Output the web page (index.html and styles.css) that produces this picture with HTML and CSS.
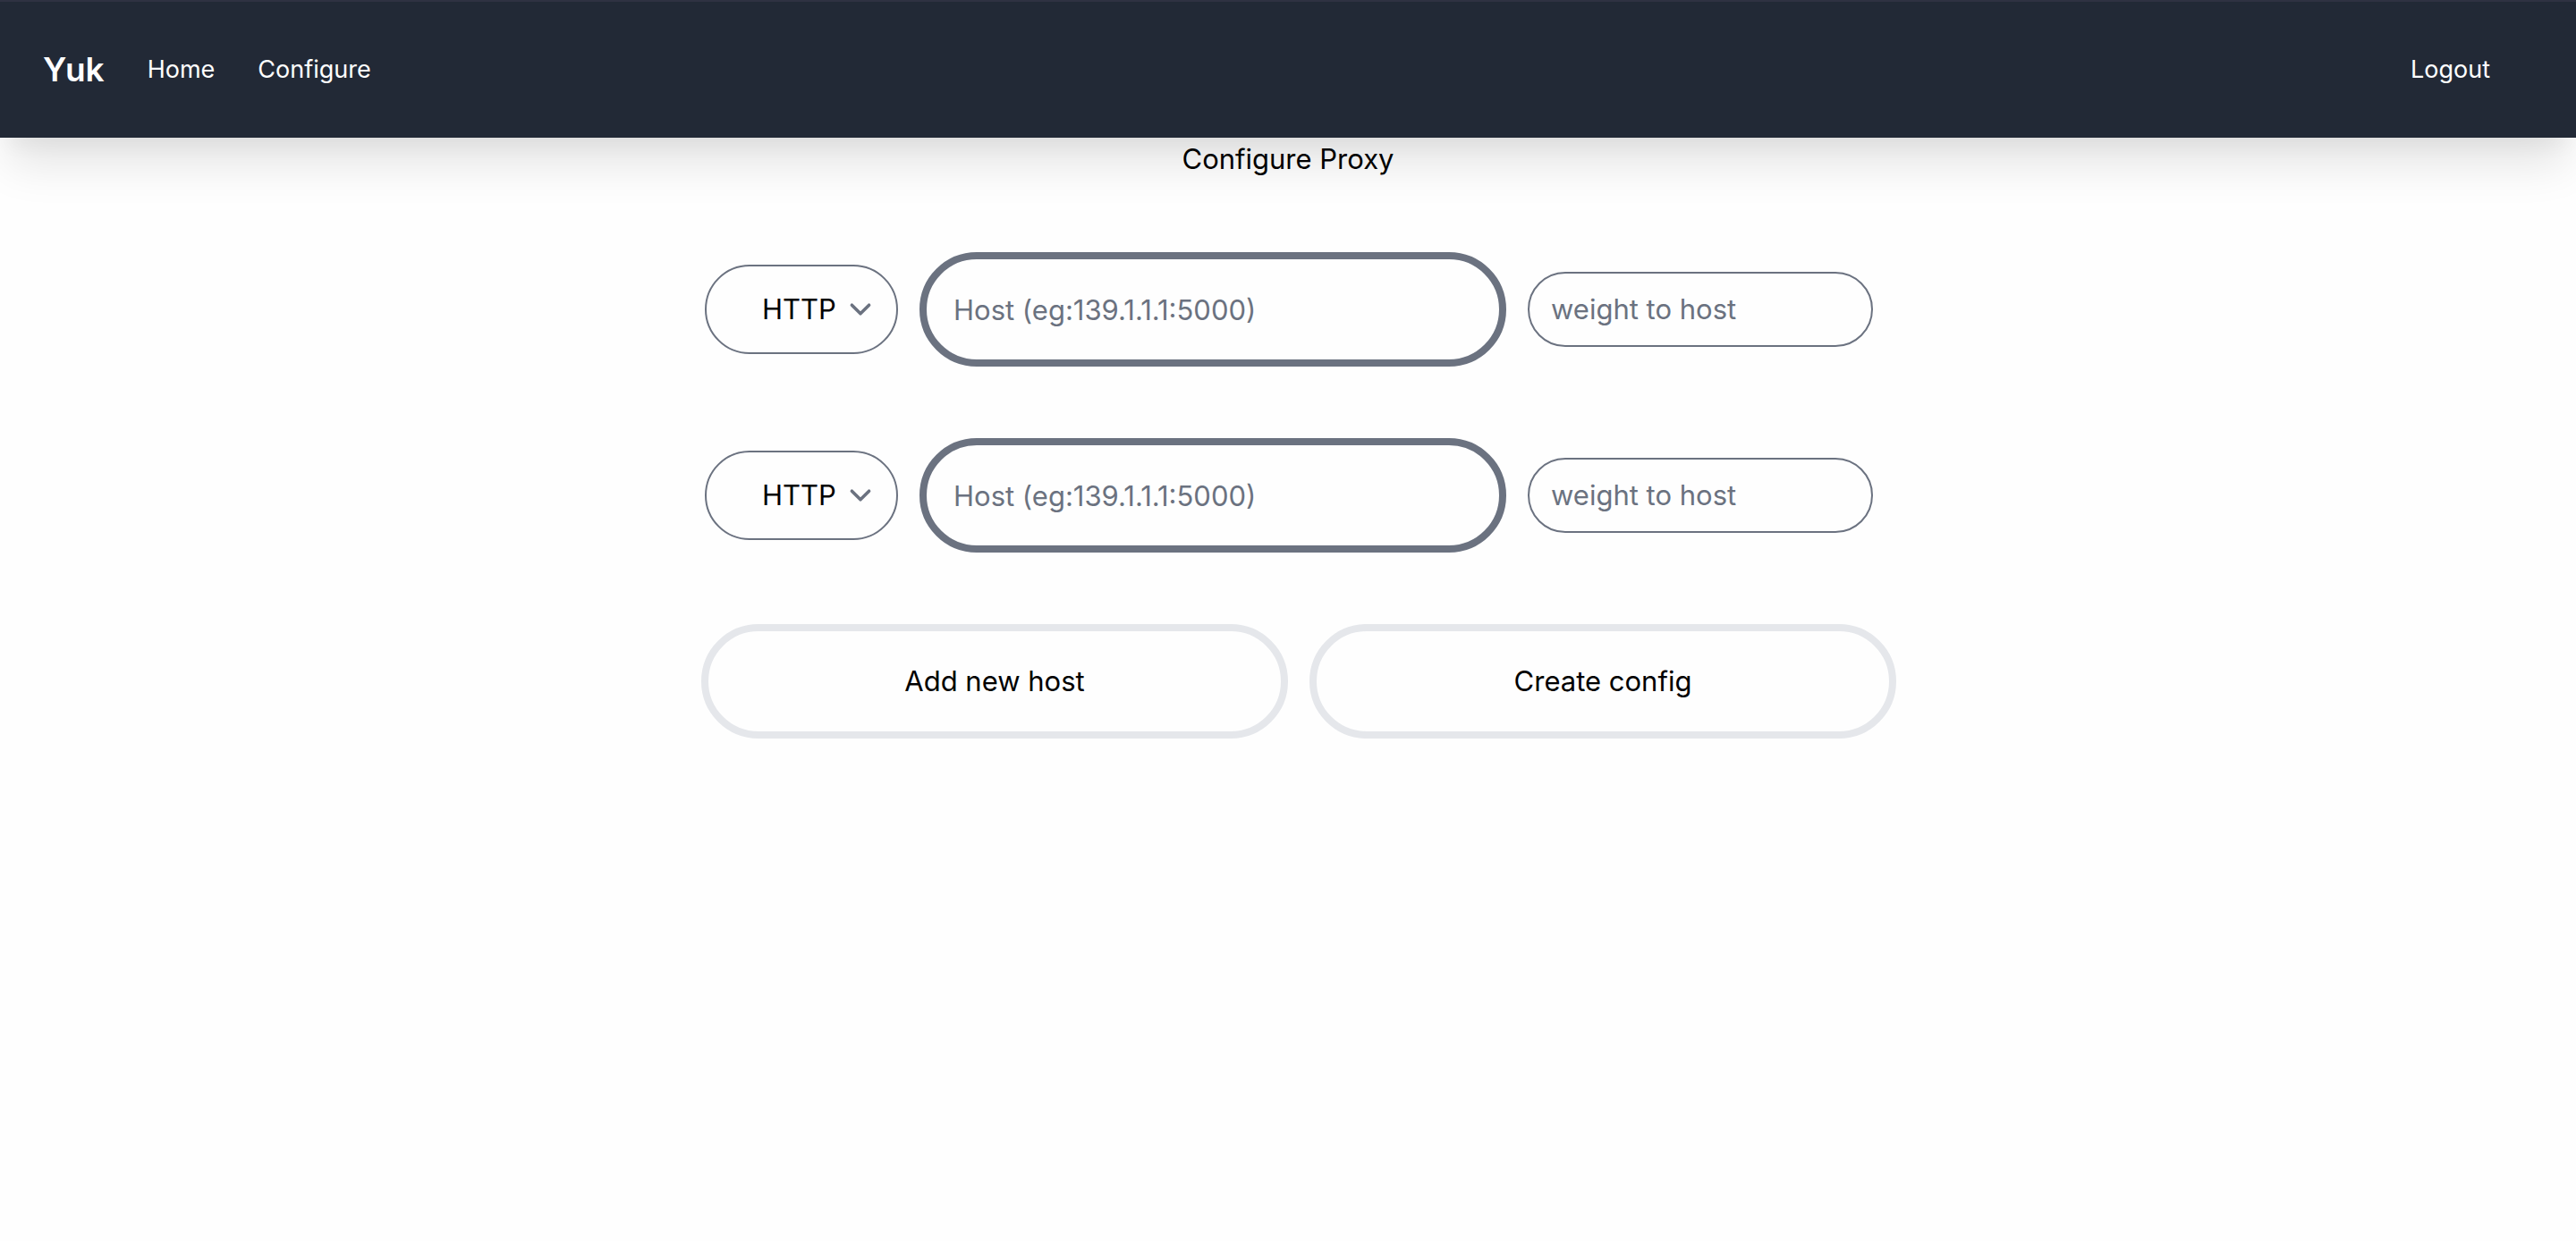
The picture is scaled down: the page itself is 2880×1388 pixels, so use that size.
FILE: index.html
```html
<!DOCTYPE html>
<html lang="en">
<head>
  <meta charset="utf-8">
  <meta name="viewport" content="width=device-width, initial-scale=1">
  <title>Yuk</title>
  <link rel="stylesheet" href="styles.css">
</head>
<body>
  <nav class="navbar">
    <a class="brand" href="#">Yuk</a>
    <a class="nav-link" href="#">Home</a>
    <a class="nav-link" href="#">Configure</a>
    <a class="nav-link nav-logout" href="#">Logout</a>
  </nav>
  <main class="content">
    <h1 class="title">Configure Proxy</h1>
    <form class="proxy-form">
      <div class="host-row">
        <select class="field protocol" aria-label="Protocol"><option>HTTP</option></select>
        <input class="field host" type="text" aria-label="Host" placeholder="Host (eg:139.1.1.1:5000)">
        <input class="field weight" type="text" aria-label="Weight" placeholder="weight to host">
      </div>
      <div class="host-row">
        <select class="field protocol" aria-label="Protocol"><option>HTTP</option></select>
        <input class="field host" type="text" aria-label="Host" placeholder="Host (eg:139.1.1.1:5000)">
        <input class="field weight" type="text" aria-label="Weight" placeholder="weight to host">
      </div>
      <div class="actions">
        <button class="action" type="button">Add new host</button>
        <button class="action" type="button">Create config</button>
      </div>
    </form>
  </main>
</body>
</html>
```

FILE: styles.css
```css
*,
*::before,
*::after {
  box-sizing: border-box;
}

body {
  margin: 0;
  background: #fefefe;
  color: #000;
  font-family: Inter, "Liberation Sans", sans-serif;
  font-size: 31px;
  line-height: 48px;
}

.navbar {
  display: flex;
  align-items: center;
  gap: 48px;
  padding: 48px 96px 48px 48px;
  border-top: 2px solid #2f3242;
  background: #222936;
  box-shadow: 0 40px 50px -10px rgba(0, 0, 0, 0.1), 0 20px 20px -10px rgba(0, 0, 0, 0.04);
}

.brand,
.nav-link {
  color: #fff;
  text-decoration: none;
}

.brand {
  font-size: 37px;
  font-weight: 600;
  line-height: 56px;
}

.nav-link {
  font-size: 27px;
  line-height: 40px;
}

.nav-logout {
  margin-left: auto;
}

.content,
.proxy-form {
  display: flex;
  flex-direction: column;
  gap: 80px;
}

.title {
  margin: 0;
  font-size: 31px;
  font-weight: 400;
  text-align: center;
}

.host-row,
.actions {
  display: flex;
  align-items: center;
  justify-content: center;
  gap: 24px;
}

.host-row {
  padding-left: 2px;
}

.actions {
  padding-left: 24px;
}

.field,
.action {
  min-width: 0;
  margin: 0;
  border-radius: 64px;
  background-color: transparent;
  color: inherit;
  font: inherit;
}

.field {
  border: 2px solid #6b7280;
}

.field::placeholder {
  color: #6b7280;
  opacity: 1;
}

.protocol {
  width: 216px;
  padding: 24px 56px 24px 62px;
  appearance: none;
  background-image: url("data:image/svg+xml,%3Csvg xmlns='http://www.w3.org/2000/svg' fill='none' viewBox='0 0 20 20'%3E%3Cpath stroke='%236b7280' stroke-linecap='round' stroke-linejoin='round' stroke-width='1.5' d='M6 8l4 4 4-4'/%3E%3C/svg%3E");
  background-position: right 16px center;
  background-repeat: no-repeat;
  background-size: 48px 48px;
}

.host,
.action {
  width: 656px;
  height: 128px;
  border-width: 8px;
}

.host {
  padding: 32px 30px;
}

.weight {
  width: 386px;
  padding: 16px 24px;
}

.action {
  border-style: solid;
  border-color: #e5e7eb;
  cursor: pointer;
}
```
